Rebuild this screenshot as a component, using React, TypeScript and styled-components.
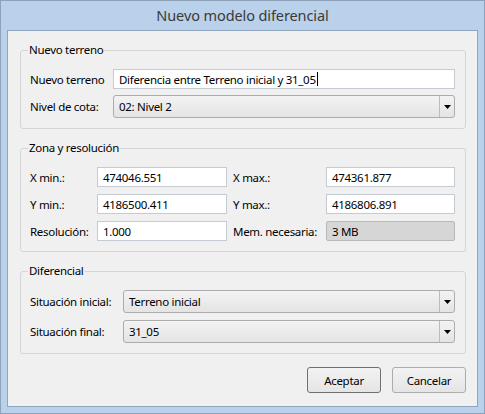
import styled, { createGlobalStyle } from "styled-components";

const GlobalStyle = createGlobalStyle`
  html, body {
    margin: 0;
    padding: 0;
    background: #ffffff;
  }
  body {
    font-family: "Noto Sans", Lato, sans-serif;
    font-size: 11.5px;
    letter-spacing: -0.3px;
    color: #000;
  }
`;

const Window = styled.div`
  box-sizing: border-box;
  width: 485px;
  height: 414px;
  border: 1px solid #8ea3b9;
  background: #b9d1ea;
  padding: 0 6px 6px 6px;
  display: flex;
  flex-direction: column;
`;

const TitleBar = styled.div`
  height: 29px;
  display: flex;
  align-items: center;
  justify-content: center;
  font-size: 14.5px;
  letter-spacing: -0.1px;
  color: #3a3a3a;
  padding-bottom: 1px;
  box-sizing: border-box;
`;

const Client = styled.div`
  flex: 1;
  border: 1px solid #91a6bc;
  background: #f0f0f0;
  padding: 19px 11px 0 12px;
  display: flex;
  flex-direction: column;
`;

const Group = styled.div<{ $mt?: number }>`
  position: relative;
  border: 1px solid #d5d5d5;
  border-radius: 3px;
  margin-top: ${(p) => p.$mt ?? 0}px;
  padding: 18px 10px 10px 9px;
`;

const GroupTitle = styled.span`
  position: absolute;
  top: -9px;
  left: 7px;
  padding: 0 1px;
  background: #f0f0f0;
  line-height: 16px;
`;

const FormGrid = styled.div<{ $cols: string; $gap: number }>`
  display: grid;
  grid-template-columns: ${(p) => p.$cols};
  row-gap: ${(p) => p.$gap}px;
  align-items: center;
`;

const Label = styled.span`
  white-space: nowrap;
`;

const TextBox = styled.div<{ $disabled?: boolean }>`
  box-sizing: border-box;
  height: 20px;
  border: 1px solid ${(p) => (p.$disabled ? "#b8b8b8" : "#c5cbd3")};
  background: ${(p) => (p.$disabled ? "#d6d6d6" : "#ffffff")};
  border-radius: ${(p) => (p.$disabled ? "2px" : "0")};
  padding: 0 5px;
  display: flex;
  align-items: center;
  white-space: nowrap;
  overflow: hidden;
`;

const Caret = styled.span`
  display: inline-block;
  width: 1px;
  height: 14px;
  background: #000;
  margin-left: 1px;
`;

const Combo = styled.div`
  box-sizing: border-box;
  height: 23px;
  border: 1px solid #acacac;
  border-radius: 3px;
  background: linear-gradient(#f3f3f3, #e4e4e4);
  display: flex;
  align-items: stretch;
`;

const ComboText = styled.span`
  flex: 1;
  display: flex;
  align-items: center;
  padding-left: 5px;
`;

const ComboButton = styled.span`
  width: 14px;
  border-left: 1px solid #bcbcbc;
  display: flex;
  align-items: center;
  justify-content: center;
`;

const Arrow = () => (
  <svg width="7" height="4" viewBox="0 0 7 4">
    <path d="M0 0 H7 L3.5 4 Z" fill="#000" />
  </svg>
);

const ButtonRow = styled.div`
  display: flex;
  justify-content: flex-end;
  gap: 11px;
  margin-top: 13px;
`;

const Button = styled.div<{ $default?: boolean }>`
  box-sizing: border-box;
  width: 74px;
  height: 26px;
  border: 1px solid ${(p) => (p.$default ? "#707070" : "#acacac")};
  border-radius: 3px;
  background: linear-gradient(#f2f2f2, #e5e5e5);
  display: flex;
  align-items: center;
  justify-content: center;
`;

const ComboBox = ({ value }: { value: string }) => (
  <Combo>
    <ComboText>{value}</ComboText>
    <ComboButton>
      <Arrow />
    </ComboButton>
  </Combo>
);

export default function App() {
  return (
    <>
      <GlobalStyle />
      <Window>
        <TitleBar>Nuevo modelo diferencial</TitleBar>
        <Client>
          <Group>
            <GroupTitle>Nuevo terreno</GroupTitle>
            <FormGrid $cols="83px 1fr" $gap={6}>
              <Label>Nuevo terreno</Label>
              <TextBox>
                Diferencia entre Terreno inicial y 31_05
                <Caret />
              </TextBox>
              <Label>Nivel de cota:</Label>
              <ComboBox value="02: Nivel 2" />
            </FormGrid>
          </Group>

          <Group $mt={19}>
            <GroupTitle>Zona y resolución</GroupTitle>
            <FormGrid $cols="67px 130px 6px 93px 1fr" $gap={7}>
              <Label>X min.:</Label>
              <TextBox>474046.551</TextBox>
              <span />
              <Label>X max.:</Label>
              <TextBox>474361.877</TextBox>
              <Label>Y min.:</Label>
              <TextBox>4186500.411</TextBox>
              <span />
              <Label>Y max.:</Label>
              <TextBox>4186806.891</TextBox>
              <Label>Resolución:</Label>
              <TextBox>1.000</TextBox>
              <span />
              <Label>Mem. necesaria:</Label>
              <TextBox $disabled>3 MB</TextBox>
            </FormGrid>
          </Group>

          <Group $mt={19}>
            <GroupTitle>Diferencial</GroupTitle>
            <FormGrid $cols="93px 1fr" $gap={7}>
              <Label>Situación inicial:</Label>
              <ComboBox value="Terreno inicial" />
              <Label>Situación final:</Label>
              <ComboBox value="31_05" />
            </FormGrid>
          </Group>

          <ButtonRow>
            <Button $default>Aceptar</Button>
            <Button>Cancelar</Button>
          </ButtonRow>
        </Client>
      </Window>
    </>
  );
}
